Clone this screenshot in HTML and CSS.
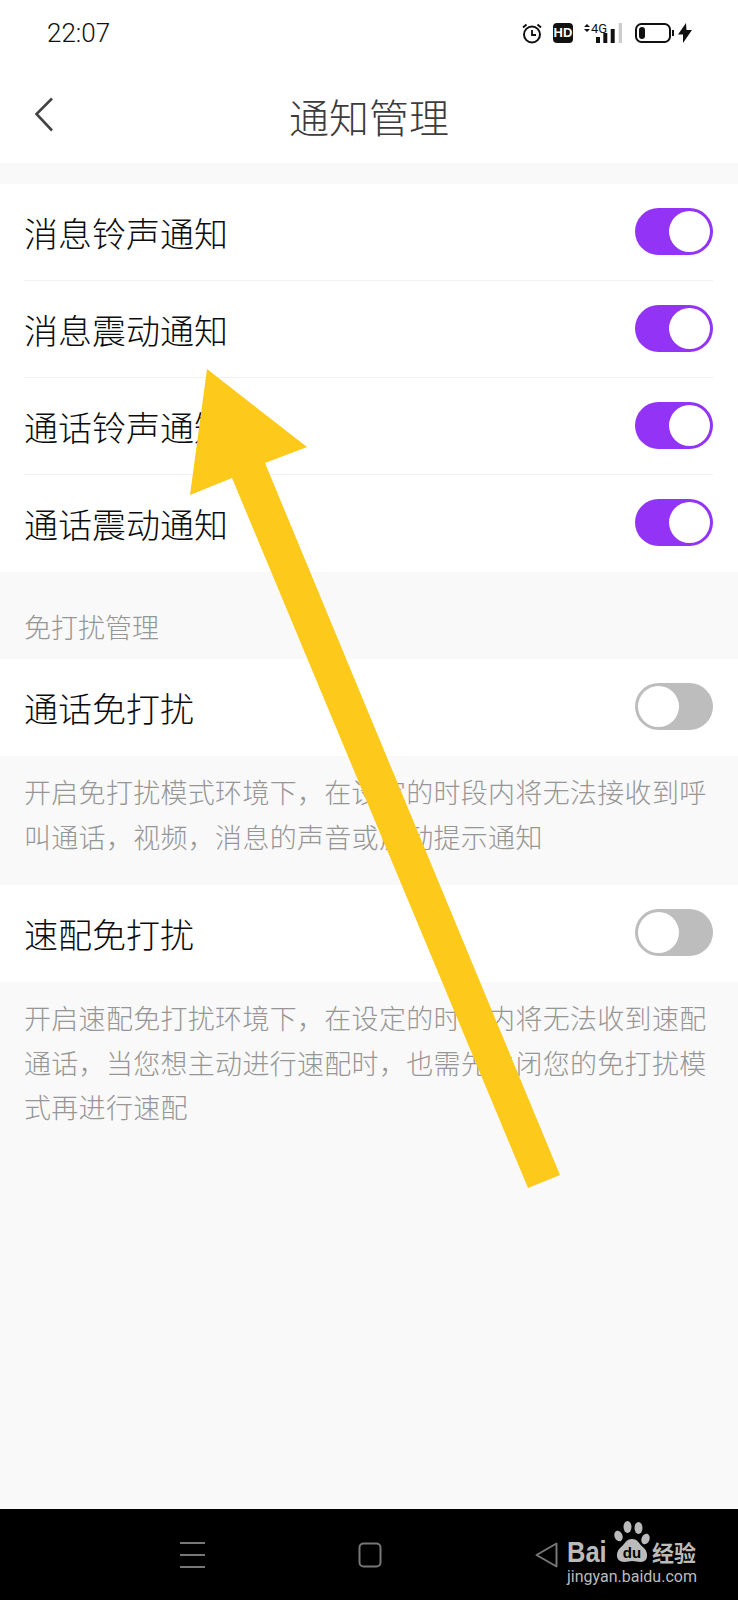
FILE: index.html
```html
<!DOCTYPE html>
<html lang="zh-CN">
<head>
    <meta charset="UTF-8">
    <meta name="viewport" content="width=device-width, initial-scale=1.0">
    <title>通知管理</title>
    <link rel="stylesheet" href="styles.css">
</head>
<body>
    <div class="screen">
        <div class="status-bar">
            <span class="clock">22:07</span>
            <div class="status-icons">
                <svg class="alarm" width="20" height="21" viewBox="0 0 20 21">
                    <circle cx="10" cy="11.500" r="8" fill="none" stroke="#111" stroke-width="2"/>
                    <path d="M10 7v5h4" fill="none" stroke="#111" stroke-width="1.800"/>
                    <path d="M1 4.500 4.500 1.500M19 4.500 15.500 1.500" stroke="#111" stroke-width="2"/>
                </svg>
                <span class="hd">HD</span>
                <span class="signal">
                    <span class="signal-text">4G</span>
                    <svg width="38" height="20" viewBox="0 0 38 20">
                        <path d="M0 4 3 1 6 4ZM0 6 3 9 6 6Z" fill="#111"/>
                        <rect x="12" y="14" width="4" height="6" fill="#111"/>
                        <rect x="19.300" y="10" width="4" height="10" fill="#111"/>
                        <rect x="26.700" y="6" width="4" height="14" fill="#111"/>
                        <rect x="34.700" y="0" width="3.300" height="20" fill="#ccc"/>
                    </svg>
                </span>
                <svg class="battery" width="39" height="20" viewBox="0 0 39 20">
                    <rect x="1" y="1" width="34" height="18" rx="5.500" fill="none" stroke="#111" stroke-width="2"/>
                    <rect x="4" y="4" width="6" height="12" rx="3" fill="#111"/>
                    <rect x="37" y="7" width="2" height="6" fill="#111"/>
                </svg>
                <svg class="bolt" width="14" height="20" viewBox="0 0 14 20">
                    <path d="M8 0 0 11.500H5V20L14 7H8.500Z" fill="#111"/>
                </svg>
            </div>
        </div>

        <div class="nav-bar">
            <svg class="back" width="20" height="35" viewBox="0 0 20 35">
                <path d="M18 1.500 2.500 17 18 33.500" fill="none" stroke="#444" stroke-width="2.600"/>
            </svg>
            <h1 class="nav-title">通知管理</h1>
            <span></span>
        </div>

        <div class="group top-group">
            <div class="row">
                <span class="row-label">消息铃声通知</span>
                <span class="toggle on"><i class="knob"></i></span>
            </div>
            <div class="row">
                <span class="row-label">消息震动通知</span>
                <span class="toggle on"><i class="knob"></i></span>
            </div>
            <div class="row">
                <span class="row-label">通话铃声通知</span>
                <span class="toggle on"><i class="knob"></i></span>
            </div>
            <div class="row last">
                <span class="row-label">通话震动通知</span>
                <span class="toggle on"><i class="knob"></i></span>
            </div>
        </div>

        <div class="section-label">免打扰管理</div>

        <div class="group">
            <div class="row last">
                <span class="row-label">通话免打扰</span>
                <span class="toggle"><i class="knob"></i></span>
            </div>
        </div>
        <p class="hint first-hint">开启免打扰模式环境下，在设定的时段内将无法接收到呼叫通话，视频，消息的声音或震动提示通知</p>

        <div class="group">
            <div class="row last">
                <span class="row-label">速配免打扰</span>
                <span class="toggle"><i class="knob"></i></span>
            </div>
        </div>
        <p class="hint">开启速配免打扰环境下，在设定的时段内将无法收到速配通话，当您想主动进行速配时，也需先关闭您的免打扰模式再进行速配</p>

        <div class="spacer"></div>

        <div class="system-bar">
            <svg width="25" height="26" viewBox="0 0 25 26">
                <path d="M0 1H25M0 13H25M0 25H25" stroke="#777" stroke-width="2"/>
            </svg>
            <svg width="24" height="26" viewBox="0 0 24 26">
                <rect x="1.500" y="1.500" width="21" height="23" rx="4" fill="none" stroke="#777" stroke-width="2"/>
            </svg>
            <svg width="23" height="26" viewBox="0 0 23 26">
                <path d="M21.500 1.500V24.500L1.500 13Z" fill="none" stroke="#777" stroke-width="2" stroke-linejoin="round"/>
            </svg>
        </div>

        <!-- annotation arrow drawn over the screenshot -->
        <svg class="arrow" width="738" height="1600" viewBox="0 0 738 1600">
            <path d="M207 369 307 447 265 463 560 1175 528 1188 232 478 190 495Z" fill="#fdca1b"/>
        </svg>

        <div class="watermark">
            <div class="wm-top">
                <span class="wm-bai">Bai</span>
                <svg class="wm-paw" width="36" height="42" viewBox="0 0 36 42">
                    <ellipse cx="4.500" cy="16" rx="4" ry="5.500" fill="#bbb" transform="rotate(-20 4.500 16)"/>
                    <ellipse cx="13.500" cy="7" rx="4" ry="6" fill="#bbb"/>
                    <ellipse cx="24.500" cy="8" rx="4" ry="6" fill="#bbb"/>
                    <ellipse cx="31.500" cy="19" rx="4" ry="5.500" fill="#bbb" transform="rotate(20 31.500 19)"/>
                    <path d="M18 19C12 19 11 24 6 28 1 33 2 42 10 42 14 42 16 41 18 41 21 41 23 42 27 42 34 42 35 33 30 28 25 24 24 19 18 19Z" fill="#bbb"/>
                    <text x="18" y="38" class="wm-du">du</text>
                </svg>
                <span class="wm-cn">经验</span>
            </div>
            <div class="wm-url">jingyan.baidu.com</div>
        </div>
    </div>
</body>
</html>
```

FILE: styles.css
```css
* {
    box-sizing: border-box;
}

body {
    margin: 0;
    background-color: #f9f9f9;
    font-family: "Noto Sans CJK SC", "Noto Sans", sans-serif;
}

.screen {
    position: relative;
    width: 738px;
    height: 1600px;
    display: flex;
    flex-direction: column;
    overflow: hidden;
    background-color: #f9f9f9;
}

/* status bar */
.status-bar {
    height: 66px;
    padding: 0 47px;
    display: flex;
    justify-content: space-between;
    align-items: center;
    background-color: white;
}

.clock {
    font-family: Roboto, sans-serif;
    font-size: 26px;
    font-weight: 300;
    color: #111;
}

.status-icons {
    margin-right: -1px;
    display: flex;
    align-items: center;
}

.hd {
    width: 20px;
    height: 20px;
    margin-left: 11px;
    border-radius: 4px;
    background-color: #111;
    color: white;
    font-family: "Liberation Sans", sans-serif;
    font-size: 13px;
    font-weight: bold;
    line-height: 20px;
    text-align: center;
}

.signal {
    position: relative;
    display: flex;
    margin-left: 11px;
}

/* small label over the signal bars */
.signal-text {
    position: absolute;
    left: 7px;
    top: -1px;
    font-family: Roboto, sans-serif;
    font-size: 13px;
    line-height: 13px;
    color: #111;
}

.battery {
    margin-left: 13px;
}

.bolt {
    margin-left: 4px;
}

/* navigation */
.nav-bar {
    height: 97px;
    display: grid;
    grid-template-columns: 1fr auto 1fr;
    align-items: center;
    background-color: white;
}

.back {
    margin-left: 34px;
}

.nav-title {
    margin: 0 0 -3px;
    font-size: 40px;
    font-weight: 300;
    line-height: 50px;
    color: #3c3c3c;
}

/* rows */
.top-group {
    margin-top: 21px;
}

.group {
    background-color: white;
}

.row {
    height: 97px;
    margin: 0 25px 0 24px;
    display: flex;
    justify-content: space-between;
    align-items: center;
    border-bottom: 1px solid #f1f1f1;
}

.row.last {
    border-bottom: none;
}

.row-label {
    font-size: 34px;
    font-weight: 300;
    color: #0c0c0c;
}

.toggle {
    width: 78px;
    height: 47px;
    margin-top: -2px;
    padding: 3px;
    display: flex;
    align-items: center;
    border-radius: 24px;
    background-color: #bdbdbd;
}

.toggle.on {
    justify-content: flex-end;
    background-color: #9333f5;
}

.knob {
    width: 41px;
    height: 41px;
    border-radius: 50%;
    background-color: white;
}

.section-label {
    height: 87px;
    padding: 35px 24px 0;
    font-size: 27px;
    font-weight: 300;
    line-height: 40px;
    color: #969696;
}

.hint {
    margin: 0;
    padding: 14px 24px 0;
    font-size: 27px;
    font-weight: 300;
    letter-spacing: 0.300px;
    line-height: 44.500px;
    color: #969696;
}

.first-hint {
    height: 129px;
}

.spacer {
    flex: 1;
}

/* system navigation */
.system-bar {
    height: 91px;
    padding: 0 0 0 180px;
    display: flex;
    align-items: center;
    gap: 153px;
    background-color: black;
}

.arrow {
    position: absolute;
    top: 0;
    left: 0;
}

/* watermark sits on top of the system bar */
.watermark {
    position: absolute;
    left: 567px;
    top: 1520px;
    width: 132px;
    color: #bbb;
}

.wm-top {
    height: 42px;
    display: flex;
    align-items: flex-end;
    white-space: nowrap;
}

.wm-bai {
    width: 41px;
    margin-bottom: -6px;
    font-family: "Liberation Sans", sans-serif;
    font-size: 29px;
    font-weight: bold;
    line-height: 32px;
    transform: scaleX(0.880);
    transform-origin: left;
}

.wm-paw {
    margin-left: 6px;
}

.wm-du {
    font-family: "Liberation Sans", sans-serif;
    font-size: 15px;
    font-weight: bold;
    text-anchor: middle;
    fill: black;
}

.wm-cn {
    margin-left: 2px;
    margin-bottom: -2px;
    font-size: 22px;
    font-weight: 700;
    line-height: 26px;
}

.wm-url {
    margin-top: 4px;
    font-family: Roboto, sans-serif;
    font-size: 16px;
    line-height: 22px;
    white-space: nowrap;
}
```
